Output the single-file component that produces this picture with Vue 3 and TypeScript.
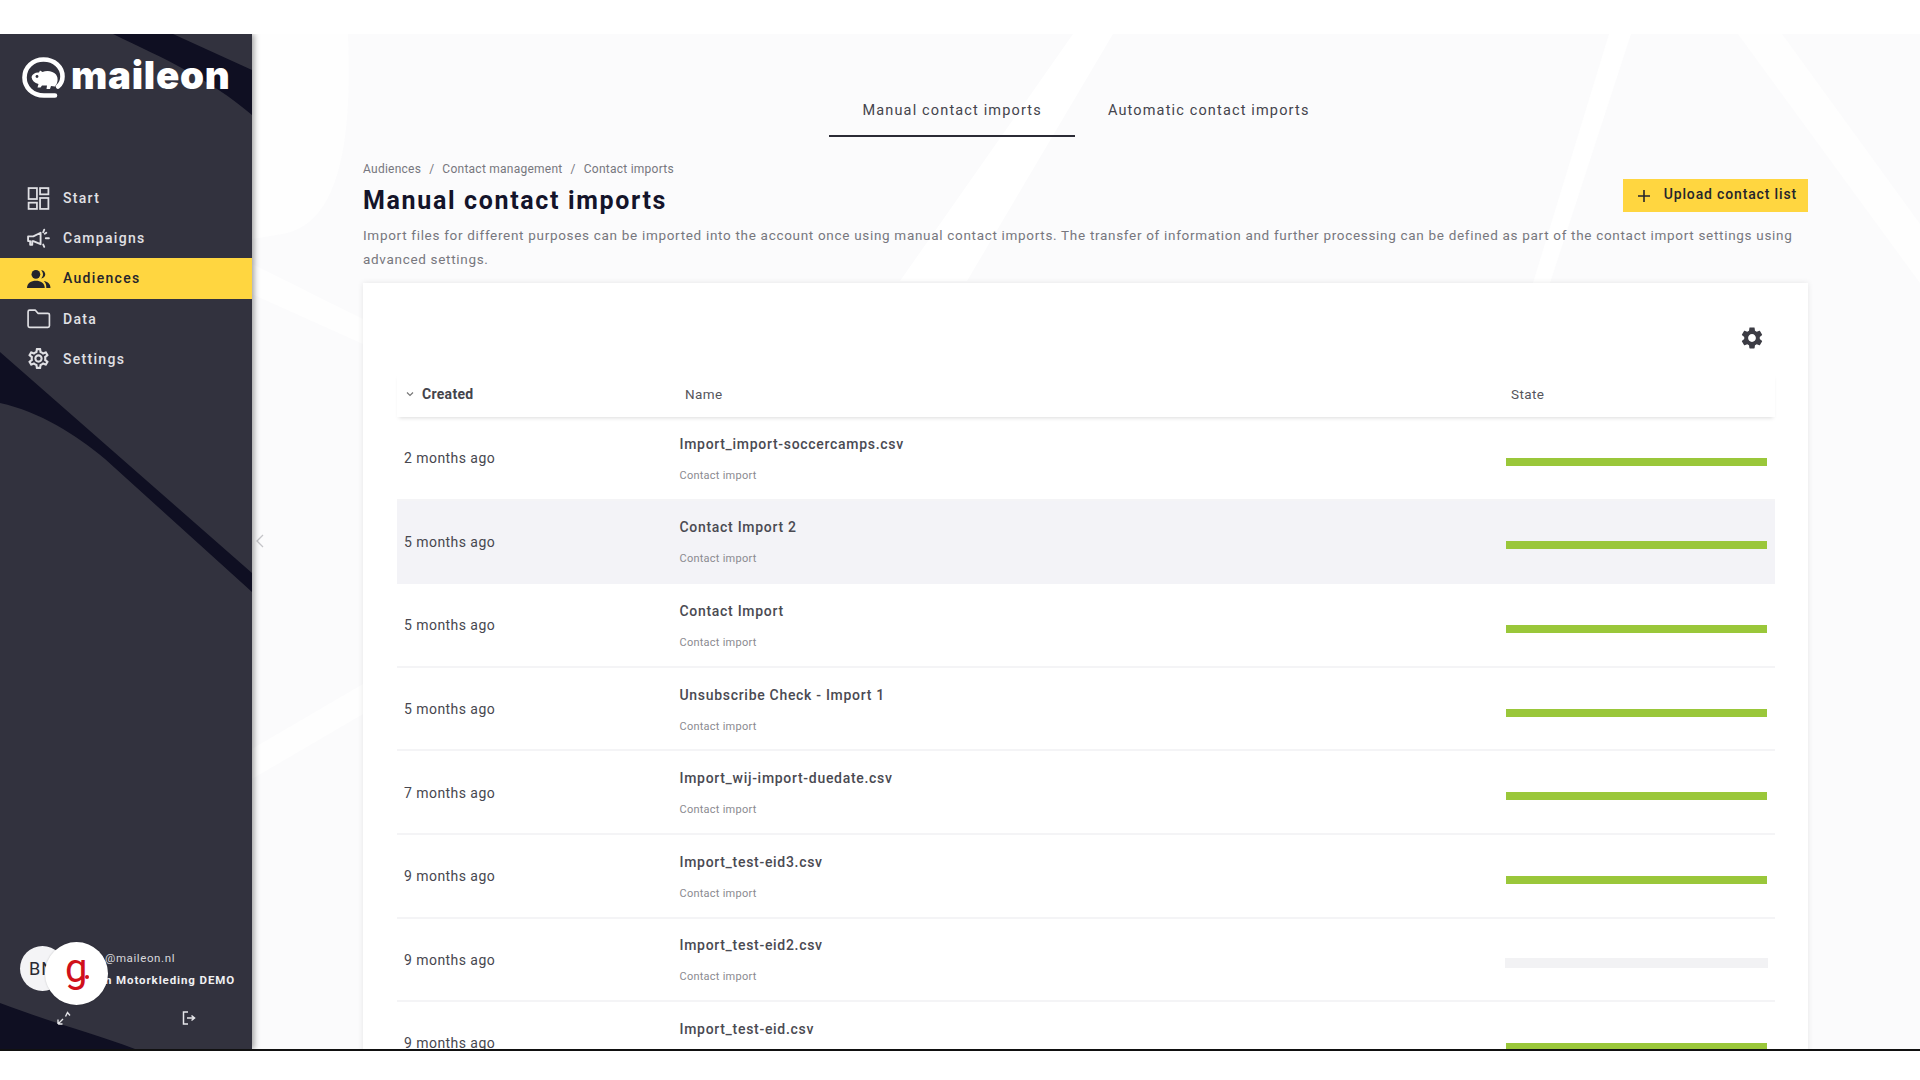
<script setup lang="ts">
interface Item { label: string; icon: string; active?: boolean }
interface Row { date: string; name: string; done: boolean; hover?: boolean }
const nav: Item[] = [
  { label: 'Start', icon: 'start' },
  { label: 'Campaigns', icon: 'campaigns' },
  { label: 'Audiences', icon: 'audiences', active: true },
  { label: 'Data', icon: 'data' },
  { label: 'Settings', icon: 'settings' },
]
const rows: Row[] = [
  { date: '2 months ago', name: 'Import_import-soccercamps.csv', done: true },
  { date: '5 months ago', name: 'Contact Import 2', done: true, hover: true },
  { date: '5 months ago', name: 'Contact Import', done: true },
  { date: '5 months ago', name: 'Unsubscribe Check - Import 1', done: true },
  { date: '7 months ago', name: 'Import_wij-import-duedate.csv', done: true },
  { date: '9 months ago', name: 'Import_test-eid3.csv', done: true },
  { date: '9 months ago', name: 'Import_test-eid2.csv', done: false },
  { date: '9 months ago', name: 'Import_test-eid.csv', done: true },
]
const gearOutline = 'M19.43 12.98c.04-.32.07-.64.07-.98 0-.34-.03-.66-.07-.98l2.11-1.65c.19-.15.24-.42.12-.64l-2-3.46c-.09-.16-.26-.25-.44-.25-.06 0-.12.01-.17.03l-2.49 1c-.52-.4-1.08-.73-1.69-.98l-.38-2.65C14.46 2.18 14.25 2 14 2h-4c-.25 0-.46.18-.49.42l-.38 2.65c-.61.25-1.17.59-1.69.98l-2.49-1c-.06-.02-.12-.03-.18-.03-.17 0-.34.09-.43.25l-2 3.46c-.13.22-.07.49.12.64l2.11 1.65c-.04.32-.07.65-.07.98 0 .33.03.66.07.98l-2.11 1.65c-.19.15-.24.42-.12.64l2 3.46c.09.16.26.25.44.25.06 0 .12-.01.17-.03l2.49-1c.52.4 1.08.73 1.69.98l.38 2.65c.03.24.24.42.49.42h4c.25 0 .46-.18.49-.42l.38-2.65c.61-.25 1.17-.59 1.69-.98l2.49 1c.06.02.12.03.18.03.17 0 .34-.09.43-.25l2-3.46c.12-.22.07-.49-.12-.64l-2.11-1.65zm-1.98-1.71c.04.31.05.52.05.73 0 .21-.02.43-.05.73l-.14 1.13.89.7 1.08.84-.7 1.21-1.27-.51-1.04-.42-.9.68c-.43.32-.84.56-1.25.73l-1.06.43-.16 1.13-.2 1.35h-1.4l-.19-1.35-.16-1.13-1.06-.43c-.43-.18-.83-.41-1.23-.71l-.91-.7-1.06.43-1.27.51-.7-1.21 1.08-.84.89-.7-.14-1.13c-.03-.31-.05-.54-.05-.74s.02-.43.05-.73l.14-1.13-.89-.7-1.08-.84.7-1.21 1.27.51 1.04.42.9-.68c.43-.32.84-.56 1.25-.73l1.06-.43.16-1.13.2-1.35h1.39l.19 1.35.16 1.13 1.06.43c.43.18.83.41 1.23.71l.91.7 1.06-.43 1.27-.51.7 1.21-1.07.85-.89.7.14 1.13zM12 8c-2.21 0-4 1.79-4 4s1.79 4 4 4 4-1.79 4-4-1.79-4-4-4zm0 6c-1.1 0-2-.9-2-2s.9-2 2-2 2 .9 2 2-.9 2-2 2z'
const gearSolid = 'M19.14,12.94c0.04-0.3,0.06-0.61,0.06-0.94c0-0.32-0.02-0.64-0.07-0.94l2.03-1.58c0.18-0.14,0.23-0.41,0.12-0.61l-1.92-3.32c-0.12-0.22-0.37-0.29-0.59-0.22l-2.39,0.96c-0.5-0.38-1.03-0.7-1.62-0.94L14.4,2.81c-0.04-0.24-0.24-0.41-0.48-0.41h-3.84c-0.24,0-0.43,0.17-0.47,0.41L9.25,5.35C8.66,5.59,8.12,5.92,7.63,6.29L5.24,5.33c-0.22-0.08-0.47,0-0.59,0.22L2.74,8.87C2.62,9.08,2.66,9.34,2.86,9.48l2.03,1.58C4.84,11.36,4.8,11.69,4.8,12s0.02,0.64,0.07,0.94l-2.03,1.58c-0.18,0.14-0.23,0.41-0.12,0.61l1.92,3.32c0.12,0.22,0.37,0.29,0.59,0.22l2.39-0.96c0.5,0.38,1.03,0.7,1.62,0.94l0.36,2.54c0.05,0.24,0.24,0.41,0.48,0.41h3.84c0.24,0,0.44-0.17,0.47-0.41l0.36-2.54c0.59-0.24,1.13-0.56,1.62-0.94l2.39,0.96c0.22,0.08,0.47,0,0.59-0.22l1.92-3.32c0.12-0.22,0.07-0.47-0.12-0.61L19.14,12.94z M12,15.6c-1.98,0-3.6-1.62-3.6-3.6s1.62-3.6,3.6-3.6s3.6,1.62,3.6,3.6S13.98,15.6,12,15.6z'
</script>

<template>
  <div class="page">
    <div class="app">
      <aside class="sidebar">
        <svg class="side-bg" viewBox="0 0 252 1015" preserveAspectRatio="none" aria-hidden="true">
          <path d="M113 0H173L252 36V81C210 45 165 25 113 0Z" fill="#0f0f22" />
          <path d="M0 318L252 539V558L105 425C75 400 40 378 0 369Z" fill="#0f0f22" />
          <path d="M0 969C50 988 95 1000 135 1015H0Z" fill="#0f0f22" />
        </svg>
        <div class="logo">
          <svg class="logo-mark" viewBox="0 0 44 41" aria-hidden="true">
            <path d="M33 38.500H22C10 38.500 2.500 30 2.500 20.500C2.500 10 11 2.500 21.500 2.500C32.500 2.500 40.500 10 40.500 19.500C40.500 23.500 39 27 36 29.500" fill="none" stroke="#fff" stroke-width="4.600" stroke-linecap="round" />
            <path d="M9.500 20C10.500 16.500 14 15 17 15.500L18 13.500L20.500 15C25 13 31 14 34 17.500C36.500 21 36 26 33 29.500L29 29L28 32H24.500L25 28.500H20L18.500 30.500H15.500L16.500 27C12.500 26 10 23.500 9.500 20Z" fill="#fff" />
            <circle cx="15" cy="19.500" r="1.400" fill="#32323e" />
          </svg>
          <span class="logo-text">maileon</span>
        </div>
        <nav class="nav">
          <a v-for="item in nav" :key="item.label" class="nav-item" :class="{ active: item.active }">
            <svg class="nav-icon" viewBox="0 0 24 24" aria-hidden="true">
              <g v-if="item.icon === 'start'" fill="none" stroke="currentColor" stroke-width="1.700">
                <rect x="2.500" y="2" width="8" height="10.500" />
                <rect x="13.500" y="2" width="8" height="6" />
                <rect x="2.500" y="16" width="8" height="6" />
                <rect x="13.500" y="11.500" width="8" height="10.500" />
              </g>
              <g v-else-if="item.icon === 'campaigns'" fill="none" stroke="currentColor" stroke-width="1.800" stroke-linecap="round" stroke-linejoin="round">
                <path d="M2 10H7L14 6.500V17.500L7 14.500H6V18H4V14.500H2Z" />
                <path d="M17.500 3.500L16.500 6M19 11.800H22M17.500 20L16.500 17.800M18 7.500L19.500 6.500" />
              </g>
              <g v-else-if="item.icon === 'audiences'" fill="currentColor">
                <circle cx="9.500" cy="8" r="4.200" />
                <path d="M1 21C1 16.500 5 14.200 9.500 14.200S18 16.500 18 21Z" />
                <path d="M14.500 4C17 4 18.500 6 18.500 8S17 12 14.500 12C15.700 10.800 16.300 9.500 16.300 8S15.700 5.200 14.500 4Z" />
                <path d="M17 14.500C20.500 15 23.500 17 23.500 21H19.500C19.500 18 18.800 16 17 14.500Z" />
              </g>
              <path v-else-if="item.icon === 'data'" d="M2 5.500C2 4.500 2.500 4 3.500 4H9L11.500 7H21C22 7 22.500 7.500 22.500 8.500V19C22.500 20 22 20.500 21 20.500H3.500C2.500 20.500 2 20 2 19Z" fill="none" stroke="currentColor" stroke-width="1.600" stroke-linejoin="round" />
              <path v-else :d="gearOutline" fill="currentColor" />
            </svg>
            <span>{{ item.label }}</span>
          </a>
        </nav>
        <div class="user">
          <div class="avatar">BN</div>
          <div class="user-text">
            <div class="user-mail">@maileon.nl</div>
            <div class="user-org">n Motorkleding DEMO</div>
          </div>
          <div class="badge"><span>g</span><i></i></div>
        </div>
        <div class="side-foot">
          <svg class="foot-icon" viewBox="0 0 16 16" aria-hidden="true">
            <path d="M2 14L7 9M2 14V9.500M2 14H6.500M9.500 6.500L11.500 2.500L14 5.500" fill="none" stroke="#e6e6ea" stroke-width="1.400" />
          </svg>
          <svg class="foot-icon" viewBox="0 0 16 16" aria-hidden="true">
            <path d="M7 2H2.500V14H7" fill="none" stroke="#e6e6ea" stroke-width="1.500" />
            <path d="M6 8H12.500M10.500 5.500L13.500 8L10.500 10.500" fill="none" stroke="#e6e6ea" stroke-width="1.500" />
          </svg>
        </div>
      </aside>
      <main class="main">
        <svg class="main-bg" viewBox="0 0 1668 1015" preserveAspectRatio="none" aria-hidden="true">
          <path d="M0 0H96C100 100 90 190 30 200L0 205Z" fill="#fefefe" />
          <path d="M0 230L111 285V310L0 260Z" fill="#fefefe" />
          <path d="M0 715L111 650V680L0 745Z" fill="#fefefe" />
          <path d="M821 0H861L715 247H648Z" fill="#ffffff" />
          <path d="M1357 0H1379L1298 249H1281Z" fill="#ffffff" />
          <path d="M1486 0H1530L1668 190V249Z" fill="#fefefe" />
        </svg>
        <svg class="collapse" viewBox="0 0 8 14" aria-hidden="true"><path d="M7 1L1 7L7 13" fill="none" stroke="#c4c4c8" stroke-width="1.300" /></svg>
        <div class="tabs">
          <a class="tab active">Manual contact imports</a>
          <a class="tab">Automatic contact imports</a>
        </div>
        <div class="content">
          <div class="head">
            <div>
              <div class="crumbs">
                <span>Audiences</span><b>/</b><span>Contact management</span><b>/</b><span>Contact imports</span>
              </div>
              <h1>Manual contact imports</h1>
            </div>
            <button class="upload" type="button">
              <svg viewBox="0 0 14 14" aria-hidden="true"><path d="M7 1V13M1 7H13" stroke="#24242c" stroke-width="1.600" /></svg>
              <span>Upload contact list</span>
            </button>
          </div>
          <p class="desc">Import files for different purposes can be imported into the account once using manual contact imports. The transfer of information and further processing can be defined as part of the contact import settings using advanced settings.</p>
          <section class="card">
            <div class="toolbar">
              <svg viewBox="0 0 24 24" aria-hidden="true"><path :d="gearSolid" fill="#3c3c44" /></svg>
            </div>
            <div class="thead">
              <div class="th created">
                <svg viewBox="0 0 8 6" aria-hidden="true"><path d="M1 1.500L4 4.500L7 1.500" fill="none" stroke="#777" stroke-width="1.200" /></svg>
                Created
              </div>
              <div class="th name-h">Name</div>
              <div class="th state-h">State</div>
            </div>
            <div v-for="row in rows" :key="row.name" class="row" :class="{ hover: row.hover }">
              <div class="date">{{ row.date }}</div>
              <div class="name">
                <div class="title">{{ row.name }}</div>
                <div class="sub">Contact import</div>
              </div>
              <div class="state"><div class="bar" :class="{ done: row.done }"></div></div>
            </div>
          </section>
        </div>
      </main>
    </div>
    <div class="rule"></div>
  </div>
</template>

<style scoped>
.page { height: 1080px; overflow: hidden; background: #fff; padding-top: 34px; box-sizing: border-box; font-family: Roboto, "Liberation Sans", sans-serif; }
.app { display: flex; height: 1015px; overflow: hidden; }
.rule { height: 2px; background: #111; }
.sidebar { position: relative; z-index: 2; width: 252px; flex: none; display: flex; flex-direction: column; background: #32323e; color: #e6e6ea; box-shadow: 2px 0 6px rgba(0,0,0,.38); }
.side-bg { position: absolute; inset: 0; width: 100%; height: 100%; }
.logo { position: relative; height: 144px; box-sizing: border-box; padding: 23px 0 0 22px; display: flex; align-items: flex-start; gap: 5px; }
.logo-mark { width: 44px; height: 41px; flex: none; }
.logo-text { font-family: Inter, "DejaVu Sans", sans-serif; font-weight: 900; font-size: 38.500px; line-height: 36px; color: #fff; letter-spacing: .7px; }
.nav { position: relative; display: flex; flex-direction: column; }
.nav-item { height: 40.200px; display: flex; align-items: center; gap: 12px; padding-left: 26px; font-size: 14px; font-weight: 500; letter-spacing: 1.300px; color: #e0e0e4; }
.nav-item.active { background: #ffd640; color: #24242c; }
.nav-icon { width: 25px; height: 25px; flex: none; }
.user { position: relative; margin-top: auto; height: 45px; display: flex; align-items: center; padding-left: 20px; }
.avatar { width: 45px; height: 45px; border-radius: 50%; background: #f4f4f6; color: #2a2a32; font-size: 18px; line-height: 45px; letter-spacing: 1px; overflow: hidden; padding-left: 9px; box-sizing: border-box; }
.user-text { padding-left: 40px; display: flex; flex-direction: column; gap: 6px; margin-top: 1px; }
.user-mail { font-size: 11.500px; line-height: 16px; letter-spacing: .6px; color: #d8d8dc; }
.user-org { font-size: 11.500px; line-height: 16px; font-weight: 700; letter-spacing: .9px; color: #f0f0f2; }
.badge { position: absolute; left: 45px; top: -4px; width: 63px; height: 63px; border-radius: 50%; background: #fff; color: #d0101a; box-shadow: 0 0 2px rgba(0,0,0,.2); }
.badge span { position: absolute; left: 20px; top: 2px; font-size: 40px; line-height: 50px; }
.badge i { position: absolute; left: 40px; top: 33px; width: 4px; height: 4px; border-radius: 50%; background: #d0101a; }
.side-foot { position: relative; height: 58px; box-sizing: border-box; padding: 19px 0 0 56px; display: flex; gap: 109px; }
.foot-icon { width: 16px; height: 16px; }
.main { position: relative; flex: 1; min-width: 0; background: #fbfbfc; overflow: hidden; }
.main-bg { position: absolute; inset: 0; width: 100%; height: 100%; }
.collapse { position: absolute; left: 4px; top: 500px; width: 8px; height: 14px; }
.tabs { position: relative; display: flex; justify-content: center; padding-top: 65px; }
.tab { padding: 0 33px 12px; line-height: 24px; font-size: 14.500px; letter-spacing: 1.150px; color: #44444c; border-bottom: 2px solid transparent; }
.tab.active { border-bottom-color: #2b2b35; }
.content { position: relative; padding: 24px 112px 0 111px; }
.head { display: flex; justify-content: space-between; align-items: flex-start; }
.crumbs { display: flex; gap: 8px; font-size: 12px; line-height: 16px; letter-spacing: .25px; color: #77777e; }
.crumbs b { font-weight: 400; }
h1 { margin: 8px 0 0; font-size: 25px; line-height: 32px; font-weight: 700; letter-spacing: 1.650px; color: #14142a; }
.upload { display: flex; align-items: center; gap: 13px; margin-top: 18px; height: 33px; padding: 0 11px 0 14px; border: 0; border-radius: 0; background: #ffd640; color: #24242c; font: 500 14px Roboto, sans-serif; letter-spacing: .85px; }
.upload span { margin-top: -3px; }
.upload svg { width: 14px; height: 14px; }
.desc { margin: 5.500px 0 12.500px; font-size: 13.500px; line-height: 24px; letter-spacing: .69px; color: #77777e; }
.card { background: #fff; box-shadow: 0 0 6px rgba(0,0,0,.09); padding: 0 33px 0 34px; }
.toolbar { height: 90px; box-sizing: border-box; padding: 42px 10px 0 0; display: flex; justify-content: flex-end; }
.toolbar svg { width: 26px; height: 26px; }
.thead { display: grid; grid-template-columns: 282px 827px 1fr; height: 44px; box-sizing: border-box; padding-bottom: 2px; align-items: center; box-shadow: 0 3px 4px -2px rgba(0,0,0,.14); }
.th { font-size: 13.500px; letter-spacing: .4px; color: #55555c; }
.created { display: flex; align-items: center; gap: 8px; padding-left: 9px; font-size: 14px; letter-spacing: .3px; font-weight: 700; color: #44444c; }
.created svg { width: 8px; height: 6px; }
.name-h { padding-left: 6px; }
.state-h { padding-left: 5px; }
.row { display: grid; grid-template-columns: 282px 827px 1fr; height: 83.600px; box-sizing: border-box; align-items: center; border-bottom: 2px solid #f4f4f6; }
.row.hover { background: #f3f3f7; border-bottom-color: #f3f3f7; }
.date { padding: 1px 0 0 7px; font-size: 14px; letter-spacing: .45px; color: #47474f; }
.name { padding: 4px 0 0 .5px; }
.title { font-size: 14px; line-height: 20px; font-weight: 500; letter-spacing: .7px; color: #4a4a52; }
.sub { margin-top: 12px; font-size: 11px; line-height: 20px; letter-spacing: .25px; color: #8a8a90; }
.state { padding-right: 8px; padding-top: 7px; }
.bar { height: 10px; margin: 0 -1px; box-sizing: border-box; background: #f2f2f4; }
.bar.done { height: 8px; background: #9ac73a; margin: 1px 0 0; }
</style>

<style>
html, body { margin: 0; background: #fff; overflow: hidden; }
</style>
